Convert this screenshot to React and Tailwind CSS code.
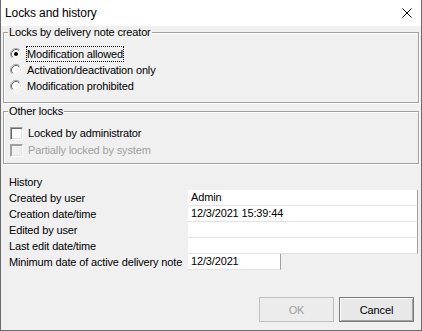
function Radio({ checked }) {
  return (
    <svg width="12" height="12" viewBox="0 0 12 12" className="shrink-0">
      <circle cx="6" cy="6" r="5" fill="#fff" />
      <path d="M2.11 9.89 A5.5 5.5 0 0 1 9.89 2.11" fill="none" stroke="#a0a0a0" strokeWidth="1" />
      <path d="M9.89 2.11 A5.5 5.5 0 0 1 2.11 9.89" fill="none" stroke="#ffffff" strokeWidth="1" />
      <path d="M2.82 9.18 A4.5 4.5 0 0 1 9.18 2.82" fill="none" stroke="#696969" strokeWidth="1" />
      <path d="M9.18 2.82 A4.5 4.5 0 0 1 2.82 9.18" fill="none" stroke="#e3e3e3" strokeWidth="1" />
      {checked && <circle cx="6" cy="6" r="2" fill="#000" />}
    </svg>
  );
}

function Check({ disabled }) {
  return (
    <div
      className={
        "w-[13px] h-[13px] shrink-0 border border-t-[#a0a0a0] border-l-[#a0a0a0] border-b-white border-r-white " +
        (disabled
          ? "bg-[#f0f0f0] shadow-[inset_1px_1px_0_#a0a0a0,inset_-1px_-1px_0_#e3e3e3]"
          : "bg-white shadow-[inset_1px_1px_0_#696969,inset_-1px_-1px_0_#e3e3e3]")
      }
    />
  );
}

function Field({ label, value, short }) {
  return (
    <div className="flex h-[16px]">
      <div className="w-[179px] shrink-0 leading-[16px]">{label}</div>
      <div
        className={
          (short ? "w-[93px]" : "w-[230px]") +
          " h-[16px] bg-white border-r border-b border-r-[#a0a0a0] border-b-[#e3e3e3] pl-[3px] leading-[15px]"
        }
      >
        {value}
      </div>
    </div>
  );
}

export default function App() {
  return (
    <div className="w-[422px] h-[331px] flex flex-col border-x border-b border-[#6d6d6d] bg-[#f0f0f0] text-[11px] leading-[16px] text-black overflow-hidden font-['Liberation_Sans',Arial,sans-serif] tracking-[-0.15px]">
      <div className="h-[26px] shrink-0 bg-white flex items-center justify-between pl-[4px] pr-[9px]">
        <span className="text-[12px] tracking-[-0.1px]">Locks and history</span>
        <svg width="10" height="10" viewBox="0 0 10 10">
          <path d="M0.5 0.5L9.5 9.5M9.5 0.5L0.5 9.5" stroke="#000" strokeWidth="1" />
        </svg>
      </div>

      <div className="flex-1 flex flex-col">
        <div className="relative ml-[2px] mt-[6px] w-[416px] h-[71px] shrink-0 border border-[#a0a0a0] shadow-[inset_1px_1px_0_#fff,1px_1px_0_#fff] pt-[13px] pl-[6px]">
          <span className="absolute left-[4px] top-[-7px] bg-[#f0f0f0] px-[1px] leading-[13px]">
            Locks by delivery note creator
          </span>
          <div className="flex items-center h-[16px]">
            <Radio checked />
            <span className="ml-[4px] border border-dotted border-black leading-[14px]">Modification allowed</span>
          </div>
          <div className="flex items-center h-[16px]">
            <Radio />
            <span className="ml-[4px] border border-transparent leading-[14px]">Activation/deactivation only</span>
          </div>
          <div className="flex items-center h-[16px]">
            <Radio />
            <span className="ml-[4px] border border-transparent leading-[14px]">Modification prohibited</span>
          </div>
        </div>

        <div className="relative ml-[2px] mt-[8px] w-[416px] h-[53px] shrink-0 border border-[#a0a0a0] shadow-[inset_1px_1px_0_#fff,1px_1px_0_#fff] pt-[13px] pl-[6px] flex flex-col gap-[1px]">
          <span className="absolute left-[4px] top-[-7px] bg-[#f0f0f0] px-[1px] leading-[13px]">Other locks</span>
          <div className="flex items-center h-[16px]">
            <Check />
            <span className="ml-[5px]">Locked by administrator</span>
          </div>
          <div className="flex items-center h-[16px]">
            <Check disabled />
            <span className="ml-[5px] text-[#a0a0a0]">Partially locked by system</span>
          </div>
        </div>

        <div className="mt-[10px] pl-[8px] flex flex-col">
          <div className="h-[16px]">History</div>
          <Field label="Created by user" value="Admin" />
          <Field label="Creation date/time" value="12/3/2021 15:39:44" />
          <Field label="Edited by user" value="" />
          <Field label="Last edit date/time" value="" />
          <Field label="Minimum date of active delivery note" value="12/3/2021" short />
        </div>

        <div className="mt-auto flex justify-end gap-[5px] pr-[7px] pb-[8px]">
          <button className="w-[75px] h-[25px] border border-[#bfbfbf] bg-[#ececec] text-[#a0a0a0]">OK</button>
          <button className="w-[75px] h-[25px] border border-[#7a7a7a] bg-[#e8e8e8] shadow-[inset_1px_1px_0_#fff,inset_-1px_-1px_0_#a0a0a0]">
            Cancel
          </button>
        </div>
      </div>
    </div>
  );
}
